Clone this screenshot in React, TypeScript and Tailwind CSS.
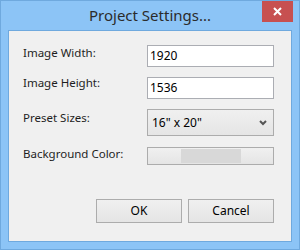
export default function App() {
  const font = { fontFamily: '"Noto Sans", "Open Sans", sans-serif' };

  return (
    <div
      className="relative flex h-[250px] w-[300px] flex-col border border-[#6fa9de] bg-[#8cc4f6] text-[11.5px] text-[#1e1e1e]"
      style={font}
    >
      {/* title bar */}
      <div className="flex h-[29px] shrink-0 items-center justify-center">
        <span className="text-[15px] leading-none text-[#2b2b2b]">Project Settings...</span>
      </div>
      <button className="absolute right-[6px] top-0 flex h-[21px] w-[31px] items-center justify-center bg-[#c75050]">
        <svg width="9" height="9" viewBox="0 0 9 9">
          <path d="M1 1 L8 8 M8 1 L1 8" stroke="white" strokeWidth="2" />
        </svg>
      </button>

      {/* client area */}
      <div className="mx-[7px] mb-[7px] flex flex-1 flex-col border border-[#6fa9de] bg-[#f0f0f0] pl-[14px] pr-[17px] pt-[14px]">
        <div className="flex h-[22px] items-start">
          <span className="mt-[-1px] w-[124px] shrink-0">Image Width:</span>
          <div className="flex h-[22px] w-[130px] items-center border border-[#abadb3] bg-white pl-[2px] text-[12px] text-black">
            1920
          </div>
        </div>
        <div className="mt-[10px] flex h-[22px] items-start">
          <span className="mt-[-3px] w-[124px] shrink-0">Image Height:</span>
          <div className="flex h-[22px] w-[130px] items-center border border-[#abadb3] bg-white pl-[2px] text-[12px] text-black">
            1536
          </div>
        </div>
        <div className="mt-[10px] flex h-[27px] items-start">
          <span className="w-[124px] shrink-0">Preset Sizes:</span>
          <div className="flex h-[27px] w-[130px] items-center justify-between border border-[#acacac] bg-gradient-to-b from-[#f0f0f0] to-[#e5e5e5] pl-[4px] pr-[6px] text-[12px] text-black">
            <span>16" x 20"</span>
            <svg width="8" height="6" viewBox="0 0 8 6">
              <path d="M1 1 L4 4 L7 1" stroke="#555" strokeWidth="2" fill="none" />
            </svg>
          </div>
        </div>
        <div className="mt-[11px] flex h-[18px] items-start">
          <span className="mt-[-2px] w-[124px] shrink-0">Background Color:</span>
          <div className="flex h-[18px] w-[128px] items-center border border-[#acacac] bg-gradient-to-b from-[#f0f0f0] to-[#e5e5e5] pl-[33px]">
            <div className="h-[14px] w-[60px] bg-[#d8d8d8]" />
          </div>
        </div>

        <div className="mt-[34px] flex justify-end gap-[6px]">
          <button className="flex h-[24px] w-[86px] items-center justify-center border border-[#acacac] bg-gradient-to-b from-[#f0f0f0] to-[#e5e5e5] text-[12px] text-black">
            OK
          </button>
          <button className="flex h-[24px] w-[86px] items-center justify-center border border-[#acacac] bg-gradient-to-b from-[#f0f0f0] to-[#e5e5e5] text-[12px] text-black">
            Cancel
          </button>
        </div>
      </div>
    </div>
  );
}
